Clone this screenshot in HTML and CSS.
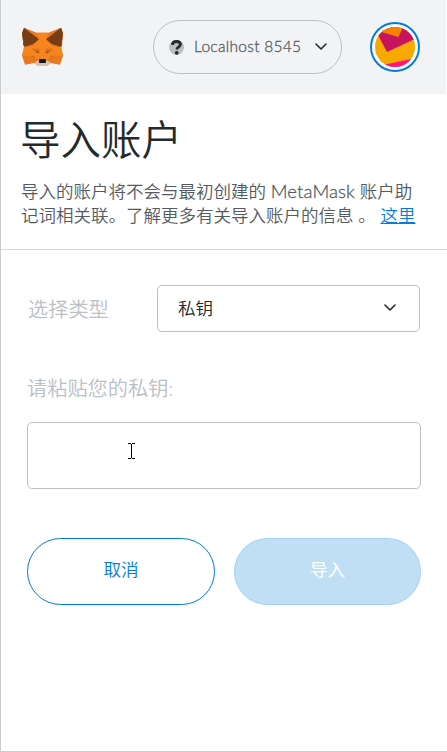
FILE: index.html
```html
<!DOCTYPE html>
<html lang="zh-CN">
<head>
<meta charset="utf-8">
<title>MetaMask</title>
<link rel="stylesheet" href="styles.css">
</head>
<body>
<div class="popup">
  <header class="header">
    <svg class="fox" viewBox="63 81 129 120">
      <path fill="#e8791f" d="M72 83L110 98H145L183 83L189 100L186 140L183 143L189 167L180 194L152 189L139 198H115L103 189L75 194L66 167L72 143L66 100Z"/>
      <path fill="#f6851b" d="M110 98H145L137 118L158 139L183 141L189 167H158L142 178H113L97 167H66L72 141L97 139L118 118Z"/>
      <path fill="#e4761b" d="M97 145L117 146L121 158L116 161L100 153ZM158 145L138 146L134 158L139 161L155 153ZM90 167H102L106 180L98 178ZM165 167H153L149 180L157 178Z"/>
      <path fill="#d5702a" d="M97 147L117 148L119 154L108 152ZM158 147L138 148L136 154L147 152ZM94 169L103 168L105 180ZM161 169L152 168L150 180Z"/>
      <path fill="#763d16" d="M72 83L117 118L100 132L75 140L69 134L70 124L68 118L66 100ZM183 83L138 118L155 132L180 140L186 134L185 124L187 118L189 100Z"/>
      <path fill="#d7c1b3" d="M103 188L116 180L119 189H136L139 180L152 188L139 198H115Z"/>
      <path fill="#4b4a48" d="M107 153L115 155L116 158L111 158ZM148 153L140 155L139 158L144 158Z"/>
      <path fill="#161616" d="M118 177H137L138 187L136 189H119L117 187Z"/>
    </svg>
    <div class="network">
      <span class="network-icon"><svg viewBox="0 0 16 16"><path d="M3.6 5.2C3.8 2.7 5.4 1.6 8 1.6C10.5 1.6 12.2 2.8 12.2 4.9C12.2 7.5 8.4 7.2 8.4 10" fill="none" stroke="#24292e" stroke-width="3"/><circle cx="8.2" cy="13.7" r="2" fill="#24292e"/></svg></span>
      <span class="network-name">Localhost 8545</span>
      <svg class="chevron" viewBox="0 0 12 8"><path d="M1 1L6 6L11 1"/></svg>
    </div>
    <div class="account">
      <svg viewBox="0 0 40 40">
        <defs><clipPath id="disc"><circle cx="20" cy="20" r="20"/></clipPath></defs>
        <g clip-path="url(#disc)">
          <path fill="#f7a900" d="M0 0H40V40H0Z"/>
          <path fill="#c8145f" d="M0 0H40V12L12 25L3 8Z"/>
          <path fill="#f58300" d="M3 4L10 0H28L23.5 10Z"/>
          <path fill="#ff1680" d="M8 38L40 31V40H8Z"/>
        </g>
      </svg>
    </div>
  </header>
  <section class="intro">
    <h1>导入账户</h1>
    <p>导入的账户将不会与最初创建的 <span class="brand">MetaMask</span> 账户助<br>记词相关联。了解更多有关导入账户的信息 。 <a href="#">这里</a></p>
  </section>
  <main class="form">
    <div class="row">
      <label>选择类型</label>
      <div class="select"><span>私钥</span><svg class="chevron" viewBox="0 0 12 8"><path d="M1 1L6 6L11 1"/></svg></div>
    </div>
    <label class="key-label">请粘贴您的私钥:</label>
    <div class="input"><svg class="cursor" viewBox="0 0 7 16" shape-rendering="crispEdges"><path fill="#000" d="M0 0H3V1H0ZM4 0H7V1H4ZM3 1H4V15H3ZM0 15H3V16H0ZM4 15H7V16H4Z"/></svg></div>
    <div class="buttons">
      <button class="cancel">取消</button>
      <button class="import" disabled>导入</button>
    </div>
  </main>
</div>
</body>
</html>
```
FILE: styles.css
```css
* { box-sizing: border-box; }
body { margin: 0; background: #fff; font-family: Lato, "Noto Sans CJK SC", sans-serif; font-weight: 350; }
.popup { width: 447px; height: 752px; border-left: 1px solid #ccc; border-bottom: 1px solid #ccc; overflow: hidden; }
.header { height: 94px; width: 445px; background: #f2f3f5; display: flex; align-items: center; padding-left: 20px; }
.fox { width: 43px; height: 40px; flex: none; }
.network { width: 189px; height: 54px; margin-left: 89px; border: 1px solid #bbc0c5; border-radius: 27px; display: flex; align-items: center; padding: 0 14px 0 15px; color: #535a61; font: 300 15.5px Lato, sans-serif; -webkit-text-stroke: .3px #535a61; }
.network-icon { width: 15px; height: 15px; border-radius: 50%; background: #bbc0c5; flex: none; }
.network-icon svg { display: block; width: 15px; height: 15px; }
.network-name { margin-left: 10px; width: 107px; white-space: nowrap; letter-spacing: .3px; margin-top: -2px; }
.chevron { width: 12px; height: 8px; flex: none; fill: none; stroke: #24292e; stroke-width: 1.6; stroke-linecap: round; stroke-linejoin: round; }
.network .chevron { margin-left: 14px; }
.account { width: 50px; height: 50px; margin-left: 28px; border: 2px solid #037dd6; border-radius: 50%; padding: 3px; background: #fff; flex: none; }
.account svg { display: block; width: 40px; height: 40px; }
.intro { height: 156px; padding: 18px 19px 0; border-bottom: 1px solid #d6d9dc; }
h1 { margin: 0; font-size: 40.5px; line-height: 56px; font-weight: 350; color: #24292e; }
p { margin: 12px 0 0; padding-left: 1px; font-size: 17.5px; line-height: 24px; color: #535a61; white-space: nowrap; }
.brand { font-weight: 300; font-size: 18.5px; line-height: 1; letter-spacing: .1px; -webkit-text-stroke: .3px #535a61; }
a { color: #037dd6; text-decoration: underline; }
.form { padding: 35px 26px 0 26px; }
.row { display: flex; align-items: center; justify-content: space-between; color: #bbc0c5; font-size: 20.2px; padding: 0 1px; }
.select { width: 263px; height: 47px; border: 1px solid #bbc0c5; border-radius: 5px; display: flex; align-items: center; justify-content: space-between; padding: 0 23px 2px 20px; font-size: 17.6px; color: #24292e; }
.key-label { display: block; margin-top: 41px; font-size: 20.2px; line-height: 30px; color: #bbc0c5; }
.input { height: 67px; margin-top: 19px; border: 1px solid #bbc0c5; border-radius: 5px; position: relative; }
.cursor { position: absolute; left: 100px; top: 20px; width: 7px; height: 16px; }
.buttons { display: grid; grid-template-columns: 188px 187px; gap: 19px; margin-top: 49px; }
button { height: 67px; border-radius: 34px; border: 1px solid #037dd6; background: #fff; color: #037dd6; font: inherit; font-size: 17.6px; padding: 0 0 6px; }
.import { background: #c0dff5; border-color: #a3d1f0; color: #fff; font-weight: 400; }
```
